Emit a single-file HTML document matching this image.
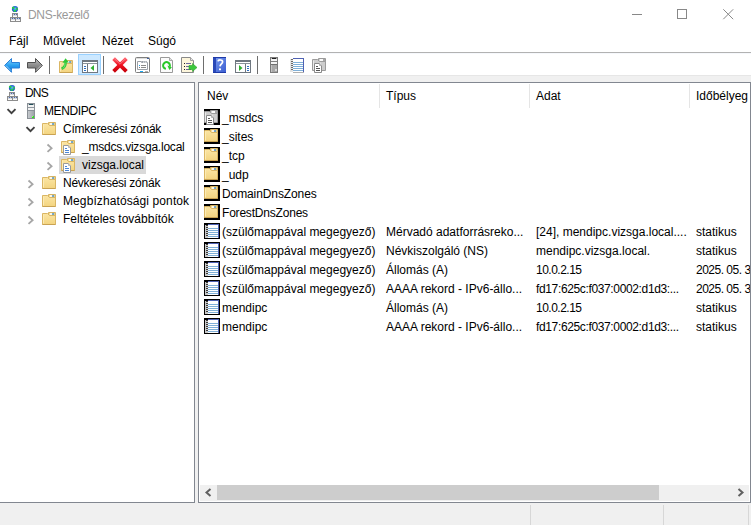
<!DOCTYPE html>
<html><head><meta charset="utf-8">
<style>
*{margin:0;padding:0;box-sizing:border-box}
html,body{width:751px;height:525px;overflow:hidden;background:#fff}
body{position:relative;font-family:"Liberation Sans",sans-serif;font-size:12px;color:#000}
.a{position:absolute}
.t{position:absolute;white-space:nowrap;line-height:14px}
svg{position:absolute;overflow:visible}
.clip{position:absolute;overflow:hidden}
</style></head><body>
<svg style="left:7px;top:5px" width="16" height="17" viewBox="0 0 16 17" ><defs><radialGradient id="gl" cx="0.5" cy="0.45" r="0.6"><stop offset="0" stop-color="#6cc0ff"/><stop offset="0.55" stop-color="#2a70e0"/><stop offset="1" stop-color="#1a3aa8"/></radialGradient></defs>
<circle cx="8" cy="4" r="3.1" fill="url(#gl)"/>
<ellipse cx="6.3" cy="2.8" rx="1.4" ry="1.1" fill="#22d040"/>
<ellipse cx="9.9" cy="3.9" rx="1" ry="1.1" fill="#30c850"/>
<ellipse cx="7.8" cy="5.8" rx="1.3" ry="1" fill="#1ee040"/><rect x="5.5" y="8.5" width="5" height="4" fill="#d6d8dc" stroke="#8c8c8c"/><rect x="6" y="9" width="4" height="1" fill="#c0c8d8"/><rect x="7" y="9" width="1" height="1" fill="#4a6aa8"/><rect x="9" y="9" width="1" height="1" fill="#4a6aa8"/><rect x="6" y="11" width="4" height="1" fill="#fafafa"/><rect x="3.5" y="12.5" width="5" height="4" fill="#d6d8dc" stroke="#8c8c8c"/><rect x="4" y="13" width="4" height="1" fill="#c0c8d8"/><rect x="5" y="13" width="1" height="1" fill="#4a6aa8"/><rect x="7" y="13" width="1" height="1" fill="#4a6aa8"/><rect x="4" y="15" width="4" height="1" fill="#fafafa"/><rect x="8.5" y="12.5" width="5" height="4" fill="#d6d8dc" stroke="#8c8c8c"/><rect x="9" y="13" width="4" height="1" fill="#c0c8d8"/><rect x="10" y="13" width="1" height="1" fill="#4a6aa8"/><rect x="12" y="13" width="1" height="1" fill="#4a6aa8"/><rect x="9" y="15" width="4" height="1" fill="#fafafa"/></svg>
<div class="t" style="left:28px;top:8px;color:#999;letter-spacing:-0.3px">DNS-kezelő</div>
<div class="a" style="left:632px;top:14px;width:10px;height:1px;background:#888"></div>
<div class="a" style="left:677px;top:9px;width:10px;height:10px;border:1px solid #888"></div>
<svg style="left:723px;top:9px" width="11" height="11" viewBox="0 0 11 11" ><path d="M0.3 0.3L10.2 10.2M10.2 0.3L0.3 10.2" stroke="#888" stroke-width="1"/></svg>
<div class="t" style="left:9px;top:34px">Fájl</div>
<div class="t" style="left:43px;top:34px">Művelet</div>
<div class="t" style="left:102px;top:34px">Nézet</div>
<div class="t" style="left:148px;top:34px">Súgó</div>
<div class="a" style="left:0px;top:52px;width:751px;height:1px;background:#b2b2b2"></div>
<div class="a" style="left:0px;top:53px;width:751px;height:1px;background:#f6f8fc"></div>
<svg style="left:3px;top:57px" width="18" height="17" viewBox="0 0 18 17" ><defs><linearGradient id="ba" x1="0" y1="0" x2="0" y2="1"><stop offset="0" stop-color="#8ad8ff"/><stop offset="0.5" stop-color="#2aa0f0"/><stop offset="1" stop-color="#0a6ad0"/></linearGradient></defs>
<path d="M1.6 8.4L8.5 1.5V5.5H16.5V11H8.5V15.3Z" fill="url(#ba)" stroke="#2a80d8" stroke-width="1" stroke-linejoin="miter"/><path d="M3 8.6L8 13.6" stroke="#a8e4ff" stroke-width="0.8"/></svg>
<svg style="left:26px;top:57px" width="18" height="17" viewBox="0 0 18 17" ><defs><linearGradient id="fa" x1="0" y1="0" x2="0" y2="1"><stop offset="0" stop-color="#c0c0c0"/><stop offset="0.5" stop-color="#8c8c8c"/><stop offset="1" stop-color="#6a6a6a"/></linearGradient></defs>
<path d="M16.4 8.4L9.5 1.5V5.5H1.5V11H9.5V15.3Z" fill="url(#fa)" stroke="#505050" stroke-width="1"/><path d="M15 8.6L10 13.6" stroke="#d8d8d8" stroke-width="0.8"/></svg>
<div class="a" style="left:49px;top:56px;width:1px;height:18px;background:#6e6e6e"></div>
<svg style="left:59px;top:58px" width="16" height="16" viewBox="0 0 16 16" ><defs><linearGradient id="fg" x1="0" y1="0" x2="0" y2="1"><stop offset="0" stop-color="#fbe5a4"/><stop offset="1" stop-color="#f3d480"/></linearGradient></defs><g transform="translate(0,1)">
<path d="M6.5 1.5H13.5V5.5H6.5Z" fill="#f4d888" stroke="#d8b462" stroke-width="1"/>
<rect x="7.8" y="2.2" width="2.4" height="1.6" fill="#ffffff"/><rect x="9.9" y="2.2" width="2.4" height="1.6" rx="0.8" fill="#3a8fe0"/>
<path d="M0.5 2.5H5.5L7.5 4.5H13.5V13.5H0.5Z" fill="url(#fg)" stroke="#dab664" stroke-width="1"/>
<path d="M1.5 3.5V12.5" stroke="#fcebb4" stroke-width="1"/>
<path d="M0.5 13.5H13.5" stroke="#c9a252" stroke-width="1"/>
</g><path d="M2.6 10.8C5.4 9.6 6.6 7.6 6.6 4.2" fill="none" stroke="#30c838" stroke-width="2.6"/><path d="M3.4 4.8L6.6 0.2L9.8 4.4Z" fill="#30c838"/><path d="M3.6 10.6C5.6 9.4 6 8 6 5" fill="none" stroke="#8ff090" stroke-width="0.7"/></svg>
<div class="a" style="left:78px;top:54px;width:23px;height:21px;background:#cce8ff;border:1px solid #99d1ff"></div>
<svg style="left:82px;top:60px" width="16" height="13" viewBox="0 0 16 13" ><rect x="0.5" y="0.5" width="15" height="12" fill="#fff" stroke="#6f7780"/>
<rect x="1" y="1" width="14" height="1" fill="#6f7780"/><rect x="1" y="3" width="14" height="1" fill="#8a929a"/>
<rect x="5" y="4" width="1" height="9" fill="#6f7780"/>
<rect x="2" y="6" width="2" height="1" fill="#2f6fc0"/><rect x="2" y="8" width="2" height="1" fill="#2f6fc0"/><rect x="2" y="10" width="2" height="1" fill="#2f6fc0"/>
<path d="M8.5 8L12 5V11Z" fill="#30b030"/></svg>
<div class="a" style="left:103px;top:56px;width:1px;height:18px;background:#6e6e6e"></div>
<svg style="left:112px;top:57px" width="16" height="16" viewBox="0 0 16 16" ><defs><linearGradient id="rx" x1="0" y1="0" x2="0" y2="1"><stop offset="0" stop-color="#ff5a66"/><stop offset="0.5" stop-color="#f01020"/><stop offset="1" stop-color="#c8000a"/></linearGradient></defs>
<path d="M1.6 1.6L14.4 14.4M14.4 1.6L1.6 14.4" stroke="url(#rx)" stroke-width="3.8" stroke-linecap="butt"/><path d="M2.6 1.8L8 7.2L13.4 1.8" fill="none" stroke="#f8a0a8" stroke-width="0.8" opacity="0.7"/></svg>
<svg style="left:135px;top:57px" width="16" height="16" viewBox="0 0 16 16" ><rect x="0.5" y="0.5" width="14" height="15" rx="1" fill="#fff" stroke="#7e7e7e"/>
<rect x="1" y="1" width="13" height="1" fill="#dcdcdc"/><rect x="12" y="1" width="2" height="1" fill="#4060a0"/>
<path d="M2.5 4.5H6.5V5.5H12.5V12.5H2.5Z" fill="#fff" stroke="#9aa0a8"/>
<rect x="7" y="4" width="5" height="2" fill="#9aa0a8"/><rect x="8" y="4.6" width="1.5" height="1" fill="#fff"/><rect x="10" y="4.6" width="1.5" height="1" fill="#fff"/>
<rect x="4" y="8" width="1" height="1" fill="#1fa0f0"/><rect x="6" y="8" width="5" height="1" fill="#8a8a8a"/>
<rect x="4" y="10" width="1" height="1" fill="#777"/><rect x="6" y="10" width="5" height="1" fill="#8a8a8a"/>
<rect x="5" y="14" width="3" height="1" fill="#1aa8f0"/><rect x="10" y="14" width="3" height="1" fill="#b0b0b0"/></svg>
<svg style="left:160px;top:57px" width="16" height="16" viewBox="0 0 16 16" ><path d="M0.5 0.5H9.5L12.5 3.5V15.5H0.5Z" fill="#fcfcfc" stroke="#9a9a9a"/>
<path d="M9.5 0.5V3.5H12.5" fill="#e0e0e0" stroke="#a8a8a8"/>
<path d="M5.91 11.85A3.4 3.4 0 1 1 9.69 9.66" fill="none" stroke="#28c828" stroke-width="2"/>
<path d="M7.4 8.6L11.9 10.2L9.4 13Z" fill="#28c828"/></svg>
<svg style="left:181px;top:57px" width="17" height="16" viewBox="0 0 17 16" ><path d="M0.5 0.5H9.5L12.5 3.5V15.5H0.5Z" fill="#fdf6dc" stroke="#8a8a8a"/>
<path d="M9.5 0.5V3.5H12.5" fill="#e8e8e8" stroke="#a0a0a0"/>
<rect x="3" y="6" width="1" height="1" fill="#222"/><rect x="5" y="6" width="5" height="1" fill="#6a6aa0"/>
<rect x="3" y="9" width="1" height="1" fill="#222"/><rect x="5" y="9" width="5" height="1" fill="#6a6aa0"/>
<rect x="3" y="12" width="1" height="1" fill="#222"/><rect x="5" y="12" width="5" height="1" fill="#6a6aa0"/>
<path d="M8 8.5H11.5V6.5L16 10.5L11.5 14.5V12.5H8Z" fill="#3cc83c" stroke="#2aa02a" stroke-width="0.6"/></svg>
<div class="a" style="left:203px;top:56px;width:1px;height:18px;background:#6e6e6e"></div>
<svg style="left:213px;top:57px" width="13" height="16" viewBox="0 0 13 16" ><defs><linearGradient id="hp" x1="0" y1="0" x2="1" y2="1"><stop offset="0" stop-color="#7a9cf0"/><stop offset="1" stop-color="#3a5cd0"/></linearGradient></defs><rect x="0" y="0" width="13" height="16" fill="url(#hp)"/>
<rect x="0" y="0" width="3" height="16" fill="#2a48b8"/><rect x="0" y="0" width="13" height="1" fill="#1e3aa8"/><rect x="0" y="15" width="13" height="1" fill="#1e3aa8"/>
<path d="M5 4.4C5.2 2.4 9.8 2.4 9.6 5C9.4 6.8 7.2 7 7 9.4" fill="none" stroke="#fff" stroke-width="1.7"/>
<rect x="6" y="11.4" width="2" height="1.8" fill="#fff"/></svg>
<svg style="left:235px;top:60px" width="16" height="13" viewBox="0 0 16 13" ><rect x="0.5" y="0.5" width="15" height="12" fill="#fff" stroke="#6f7780"/>
<rect x="1" y="1" width="14" height="1" fill="#6f7780"/><rect x="1" y="3" width="14" height="1" fill="#8a929a"/>
<rect x="10" y="4" width="1" height="9" fill="#6f7780"/>
<rect x="12" y="6" width="2" height="1" fill="#2f6fc0"/><rect x="12" y="8" width="2" height="1" fill="#2f6fc0"/><rect x="12" y="10" width="2" height="1" fill="#2f6fc0"/>
<path d="M4 5L7.5 8L4 11Z" fill="#30b030"/></svg>
<div class="a" style="left:257px;top:56px;width:1px;height:18px;background:#6e6e6e"></div>
<svg style="left:270px;top:57px" width="8" height="16" viewBox="0 0 8 16" ><rect x="0.5" y="0.5" width="7" height="15" fill="#a8a8a8" stroke="#7a7a7a"/>
<rect x="1" y="1" width="1" height="14" fill="#c4c4c4"/>
<rect x="2" y="1" width="4" height="1" fill="#202020"/>
<rect x="1" y="2" width="6" height="2" fill="#f4f4f4"/>
<rect x="1" y="4" width="6" height="1" fill="#808080"/>
<rect x="1" y="5" width="6" height="2" fill="#f4f4f4"/>
<rect x="1" y="7" width="6" height="1" fill="#707070"/>
<rect x="5" y="12" width="2" height="2" fill="#d8d8d8"/></svg>
<svg style="left:289px;top:57px" width="16" height="16" viewBox="0 0 16 16" ><rect x="4" y="1" width="11" height="14" fill="#fff"/><rect x="4" y="1" width="11" height="1" fill="#4f62b4"/><rect x="14" y="1" width="1" height="14" fill="#4f62b4"/><rect x="4" y="5" width="10" height="1" fill="#7fb0d8"/><rect x="4" y="7" width="10" height="1" fill="#7fb0d8"/><rect x="4" y="9" width="10" height="1" fill="#7fb0d8"/><rect x="4" y="11" width="10" height="1" fill="#7fb0d8"/><rect x="4" y="13" width="10" height="1" fill="#7fb0d8"/><rect x="1" y="2" width="3" height="13" fill="#e4e4e4"/><rect x="2" y="2" width="2" height="1" fill="#6a6a6a"/><rect x="2" y="4" width="2" height="1" fill="#6a6a6a"/><rect x="2" y="6" width="2" height="1" fill="#6a6a6a"/><rect x="2" y="8" width="2" height="1" fill="#6a6a6a"/><rect x="2" y="10" width="2" height="1" fill="#6a6a6a"/><rect x="2" y="12" width="2" height="1" fill="#6a6a6a"/><rect x="4" y="15" width="11" height="1" fill="#b0b0b0"/></svg>
<svg style="left:312px;top:57px" width="16" height="16" viewBox="0 0 16 16" ><g transform="translate(0,0)">
<path d="M6.5 1.5H13.5V5.5H6.5Z" fill="#d4d4d4" stroke="#9a9a9a"/>
<rect x="8" y="2" width="3" height="2" fill="#fafafa"/><rect x="11" y="2" width="2" height="2" fill="#a8a8a8"/>
<path d="M0.5 2.5H5.5L7.5 4.5H13.5V13.5H0.5Z" fill="#cdcdcd" stroke="#9c9c9c"/>
<path d="M1.5 3.5V12.5" stroke="#ececec"/>
<path d="M8.5 5.5V12.5" stroke="#dedede"/>
<path d="M2.5 6.5H7.5L9.5 8.5V15.5H2.5Z" fill="#fff" stroke="#8a8a8a"/>
<path d="M7.5 6.5V8.5H9.5" fill="#eee" stroke="#b0b0b0"/>
<rect x="4" y="9" width="2" height="1" fill="#555"/>
<rect x="4" y="11" width="4" height="1" fill="#555"/>
<rect x="4" y="13" width="4" height="1" fill="#555"/>
</g></svg>
<div class="a" style="left:0px;top:75px;width:751px;height:7px;background:#f0f0f0"></div>
<div class="a" style="left:0px;top:75px;width:751px;height:1px;background:#e6e6e6"></div>
<div class="a" style="left:0;top:82px;width:195px;height:421px;border-top:1px solid #828790;border-right:1px solid #828790;border-bottom:1px solid #828790;background:#fff"></div>
<div class="a" style="left:195px;top:82px;width:3px;height:421px;background:#f0f0f0"></div>
<div class="a" style="left:198px;top:82px;width:553px;height:421px;border:1px solid #828790;background:#fff"></div>
<div class="a" style="left:0px;top:503px;width:751px;height:22px;background:#f0f0f0"></div>
<div class="a" style="left:530px;top:505px;width:1px;height:20px;background:#d7d7d7"></div>
<div class="a" style="left:663px;top:505px;width:1px;height:20px;background:#d7d7d7"></div>
<div class="a" style="left:748px;top:505px;width:1px;height:20px;background:#d7d7d7"></div>
<svg style="left:4px;top:84px" width="16" height="17" viewBox="0 0 16 17" ><defs><radialGradient id="gl" cx="0.5" cy="0.45" r="0.6"><stop offset="0" stop-color="#6cc0ff"/><stop offset="0.55" stop-color="#2a70e0"/><stop offset="1" stop-color="#1a3aa8"/></radialGradient></defs>
<circle cx="8" cy="4" r="3.1" fill="url(#gl)"/>
<ellipse cx="6.3" cy="2.8" rx="1.4" ry="1.1" fill="#22d040"/>
<ellipse cx="9.9" cy="3.9" rx="1" ry="1.1" fill="#30c850"/>
<ellipse cx="7.8" cy="5.8" rx="1.3" ry="1" fill="#1ee040"/><rect x="5.5" y="8.5" width="5" height="4" fill="#d6d8dc" stroke="#8c8c8c"/><rect x="6" y="9" width="4" height="1" fill="#c0c8d8"/><rect x="7" y="9" width="1" height="1" fill="#4a6aa8"/><rect x="9" y="9" width="1" height="1" fill="#4a6aa8"/><rect x="6" y="11" width="4" height="1" fill="#fafafa"/><rect x="3.5" y="12.5" width="5" height="4" fill="#d6d8dc" stroke="#8c8c8c"/><rect x="4" y="13" width="4" height="1" fill="#c0c8d8"/><rect x="5" y="13" width="1" height="1" fill="#4a6aa8"/><rect x="7" y="13" width="1" height="1" fill="#4a6aa8"/><rect x="4" y="15" width="4" height="1" fill="#fafafa"/><rect x="8.5" y="12.5" width="5" height="4" fill="#d6d8dc" stroke="#8c8c8c"/><rect x="9" y="13" width="4" height="1" fill="#c0c8d8"/><rect x="10" y="13" width="1" height="1" fill="#4a6aa8"/><rect x="12" y="13" width="1" height="1" fill="#4a6aa8"/><rect x="9" y="15" width="4" height="1" fill="#fafafa"/></svg>
<div class="t" style="left:25px;top:86px;letter-spacing:-0.8px">DNS</div>
<svg style="left:6px;top:108px" width="10" height="7" viewBox="0 0 10 7" ><path d="M1.5 1.2L5.5 5.2L9.5 1.2" fill="none" stroke="#404040" stroke-width="1.9"/></svg>
<svg style="left:27px;top:103px" width="8" height="16" viewBox="0 0 8 16" ><defs><linearGradient id="sv" x1="0" y1="0" x2="1" y2="0"><stop offset="0" stop-color="#c8ccd0"/><stop offset="1" stop-color="#9aa0a6"/></linearGradient></defs>
<rect x="0.5" y="0.5" width="7" height="15" fill="url(#sv)" stroke="#8a9096"/>
<rect x="2" y="1" width="4" height="1" fill="#1f4f5a"/>
<rect x="1" y="2" width="6" height="2" fill="#f2f2f2"/>
<rect x="1" y="4" width="6" height="1" fill="#9098a0"/>
<rect x="1" y="5" width="6" height="2" fill="#f2f2f2"/>
<rect x="1" y="7" width="6" height="1" fill="#8a9098"/>
<rect x="5" y="13" width="2" height="2" fill="#30e020"/><rect x="5" y="13" width="1" height="1" fill="#a0f080"/></svg>
<div class="t" style="left:44px;top:104px;letter-spacing:-0.4px">MENDIPC</div>
<svg style="left:25px;top:126px" width="10" height="7" viewBox="0 0 10 7" ><path d="M1.5 1.2L5.5 5.2L9.5 1.2" fill="none" stroke="#404040" stroke-width="1.9"/></svg>
<svg style="left:42px;top:121px" width="16" height="16" viewBox="0 0 16 16" ><defs><linearGradient id="fg" x1="0" y1="0" x2="0" y2="1"><stop offset="0" stop-color="#fbe5a4"/><stop offset="1" stop-color="#f3d480"/></linearGradient></defs><g transform="translate(0,0)">
<path d="M6.5 1.5H13.5V5.5H6.5Z" fill="#f4d888" stroke="#d8b462" stroke-width="1"/>
<rect x="7.8" y="2.2" width="2.4" height="1.6" fill="#ffffff"/><rect x="9.9" y="2.2" width="2.4" height="1.6" rx="0.8" fill="#3a8fe0"/>
<path d="M0.5 2.5H5.5L7.5 4.5H13.5V13.5H0.5Z" fill="url(#fg)" stroke="#dab664" stroke-width="1"/>
<path d="M1.5 3.5V12.5" stroke="#fcebb4" stroke-width="1"/>
<path d="M0.5 13.5H13.5" stroke="#c9a252" stroke-width="1"/>
</g></svg>
<div class="t" style="left:63px;top:122px;letter-spacing:-0.23px">Címkeresési zónák</div>
<svg style="left:47px;top:144px" width="7" height="10" viewBox="0 0 7 10" ><path d="M0.5 0.5L4.6 4.2L0.5 7.9" fill="none" stroke="#a6a6a6" stroke-width="1.8"/></svg>
<svg style="left:61px;top:139px" width="16" height="18" viewBox="0 0 16 18" ><defs><linearGradient id="fg" x1="0" y1="0" x2="0" y2="1"><stop offset="0" stop-color="#fbe5a4"/><stop offset="1" stop-color="#f3d480"/></linearGradient></defs><g transform="translate(0,0)">
<path d="M6.5 1.5H13.5V5.5H6.5Z" fill="#f4d888" stroke="#d8b462" stroke-width="1"/>
<rect x="7.8" y="2.2" width="2.4" height="1.6" fill="#ffffff"/><rect x="9.9" y="2.2" width="2.4" height="1.6" rx="0.8" fill="#3a8fe0"/>
<path d="M0.5 2.5H5.5L7.5 4.5H13.5V13.5H0.5Z" fill="url(#fg)" stroke="#dab664" stroke-width="1"/>
<path d="M1.5 3.5V12.5" stroke="#fcebb4" stroke-width="1"/>
<path d="M0.5 13.5H13.5" stroke="#c9a252" stroke-width="1"/>
</g><g transform="translate(2,6)">
<path d="M0.5 0.5H5.5L7.5 2.5V9.5H0.5Z" fill="#fff" stroke="#9a9a9a" stroke-width="1"/>
<path d="M5.5 0.5V2.5H7.5" fill="#ececec" stroke="#b8b8b8" stroke-width="1"/>
<rect x="2" y="3" width="2" height="1" fill="#4a86d8"/>
<rect x="2" y="5" width="4" height="1" fill="#4a86d8"/>
<rect x="2" y="7" width="4" height="1" fill="#4a86d8"/>
</g></svg>
<div class="t" style="left:82px;top:140px;letter-spacing:-0.22px">_msdcs.vizsga.local</div>
<div class="a" style="left:59px;top:156px;width:87px;height:18px;background:#d9d9d9"></div>
<svg style="left:47px;top:162px" width="7" height="10" viewBox="0 0 7 10" ><path d="M0.5 0.5L4.6 4.2L0.5 7.9" fill="none" stroke="#a6a6a6" stroke-width="1.8"/></svg>
<svg style="left:61px;top:157px" width="16" height="18" viewBox="0 0 16 18" ><defs><linearGradient id="fg" x1="0" y1="0" x2="0" y2="1"><stop offset="0" stop-color="#fbe5a4"/><stop offset="1" stop-color="#f3d480"/></linearGradient></defs><g transform="translate(0,0)">
<path d="M6.5 1.5H13.5V5.5H6.5Z" fill="#f4d888" stroke="#d8b462" stroke-width="1"/>
<rect x="7.8" y="2.2" width="2.4" height="1.6" fill="#ffffff"/><rect x="9.9" y="2.2" width="2.4" height="1.6" rx="0.8" fill="#3a8fe0"/>
<path d="M0.5 2.5H5.5L7.5 4.5H13.5V13.5H0.5Z" fill="url(#fg)" stroke="#dab664" stroke-width="1"/>
<path d="M1.5 3.5V12.5" stroke="#fcebb4" stroke-width="1"/>
<path d="M0.5 13.5H13.5" stroke="#c9a252" stroke-width="1"/>
</g><g transform="translate(2,6)">
<path d="M0.5 0.5H5.5L7.5 2.5V9.5H0.5Z" fill="#fff" stroke="#9a9a9a" stroke-width="1"/>
<path d="M5.5 0.5V2.5H7.5" fill="#ececec" stroke="#b8b8b8" stroke-width="1"/>
<rect x="2" y="3" width="2" height="1" fill="#4a86d8"/>
<rect x="2" y="5" width="4" height="1" fill="#4a86d8"/>
<rect x="2" y="7" width="4" height="1" fill="#4a86d8"/>
</g></svg>
<div class="t" style="left:82px;top:158px">vizsga.local</div>
<svg style="left:28px;top:180px" width="7" height="10" viewBox="0 0 7 10" ><path d="M0.5 0.5L4.6 4.2L0.5 7.9" fill="none" stroke="#a6a6a6" stroke-width="1.8"/></svg>
<svg style="left:42px;top:175px" width="16" height="16" viewBox="0 0 16 16" ><defs><linearGradient id="fg" x1="0" y1="0" x2="0" y2="1"><stop offset="0" stop-color="#fbe5a4"/><stop offset="1" stop-color="#f3d480"/></linearGradient></defs><g transform="translate(0,0)">
<path d="M6.5 1.5H13.5V5.5H6.5Z" fill="#f4d888" stroke="#d8b462" stroke-width="1"/>
<rect x="7.8" y="2.2" width="2.4" height="1.6" fill="#ffffff"/><rect x="9.9" y="2.2" width="2.4" height="1.6" rx="0.8" fill="#3a8fe0"/>
<path d="M0.5 2.5H5.5L7.5 4.5H13.5V13.5H0.5Z" fill="url(#fg)" stroke="#dab664" stroke-width="1"/>
<path d="M1.5 3.5V12.5" stroke="#fcebb4" stroke-width="1"/>
<path d="M0.5 13.5H13.5" stroke="#c9a252" stroke-width="1"/>
</g></svg>
<div class="t" style="left:63px;top:176px;letter-spacing:-0.25px">Névkeresési zónák</div>
<svg style="left:28px;top:198px" width="7" height="10" viewBox="0 0 7 10" ><path d="M0.5 0.5L4.6 4.2L0.5 7.9" fill="none" stroke="#a6a6a6" stroke-width="1.8"/></svg>
<svg style="left:42px;top:193px" width="16" height="16" viewBox="0 0 16 16" ><defs><linearGradient id="fg" x1="0" y1="0" x2="0" y2="1"><stop offset="0" stop-color="#fbe5a4"/><stop offset="1" stop-color="#f3d480"/></linearGradient></defs><g transform="translate(0,0)">
<path d="M6.5 1.5H13.5V5.5H6.5Z" fill="#f4d888" stroke="#d8b462" stroke-width="1"/>
<rect x="7.8" y="2.2" width="2.4" height="1.6" fill="#ffffff"/><rect x="9.9" y="2.2" width="2.4" height="1.6" rx="0.8" fill="#3a8fe0"/>
<path d="M0.5 2.5H5.5L7.5 4.5H13.5V13.5H0.5Z" fill="url(#fg)" stroke="#dab664" stroke-width="1"/>
<path d="M1.5 3.5V12.5" stroke="#fcebb4" stroke-width="1"/>
<path d="M0.5 13.5H13.5" stroke="#c9a252" stroke-width="1"/>
</g></svg>
<div class="t" style="left:63px;top:194px;letter-spacing:0.1px">Megbízhatósági pontok</div>
<svg style="left:28px;top:216px" width="7" height="10" viewBox="0 0 7 10" ><path d="M0.5 0.5L4.6 4.2L0.5 7.9" fill="none" stroke="#a6a6a6" stroke-width="1.8"/></svg>
<svg style="left:42px;top:211px" width="16" height="16" viewBox="0 0 16 16" ><defs><linearGradient id="fg" x1="0" y1="0" x2="0" y2="1"><stop offset="0" stop-color="#fbe5a4"/><stop offset="1" stop-color="#f3d480"/></linearGradient></defs><g transform="translate(0,0)">
<path d="M6.5 1.5H13.5V5.5H6.5Z" fill="#f4d888" stroke="#d8b462" stroke-width="1"/>
<rect x="7.8" y="2.2" width="2.4" height="1.6" fill="#ffffff"/><rect x="9.9" y="2.2" width="2.4" height="1.6" rx="0.8" fill="#3a8fe0"/>
<path d="M0.5 2.5H5.5L7.5 4.5H13.5V13.5H0.5Z" fill="url(#fg)" stroke="#dab664" stroke-width="1"/>
<path d="M1.5 3.5V12.5" stroke="#fcebb4" stroke-width="1"/>
<path d="M0.5 13.5H13.5" stroke="#c9a252" stroke-width="1"/>
</g></svg>
<div class="t" style="left:63px;top:212px">Feltételes továbbítók</div>
<div class="clip" style="left:199px;top:83px;width:551px;height:402px">
<div class="t" style="left:8px;top:6px">Név</div>
<div class="a" style="left:180px;top:1px;width:1px;height:24px;background:#e5e5e5"></div>
<div class="t" style="left:187px;top:6px">Típus</div>
<div class="a" style="left:330px;top:1px;width:1px;height:24px;background:#e5e5e5"></div>
<div class="t" style="left:337px;top:6px">Adat</div>
<div class="a" style="left:490px;top:1px;width:1px;height:24px;background:#e5e5e5"></div>
<div class="t" style="left:497px;top:6px">Időbélyeg</div>
<svg style="left:5px;top:26px" width="16" height="16" viewBox="0 0 16 16" ><rect x="0" y="0" width="16" height="16" fill="#000"/><g transform="translate(0,0)">
<path d="M6.5 1.5H13.5V5.5H6.5Z" fill="#d4d4d4" stroke="#9a9a9a"/>
<rect x="8" y="2" width="3" height="2" fill="#fafafa"/><rect x="11" y="2" width="2" height="2" fill="#a8a8a8"/>
<path d="M0.5 2.5H5.5L7.5 4.5H13.5V13.5H0.5Z" fill="#cdcdcd" stroke="#9c9c9c"/>
<path d="M1.5 3.5V12.5" stroke="#ececec"/>
<path d="M8.5 5.5V12.5" stroke="#dedede"/>
<path d="M2.5 6.5H7.5L9.5 8.5V15.5H2.5Z" fill="#fff" stroke="#8a8a8a"/>
<path d="M7.5 6.5V8.5H9.5" fill="#eee" stroke="#b0b0b0"/>
<rect x="4" y="9" width="2" height="1" fill="#555"/>
<rect x="4" y="11" width="4" height="1" fill="#555"/>
<rect x="4" y="13" width="4" height="1" fill="#555"/>
</g></svg>
<div class="t" style="left:23px;top:28px">_msdcs</div>
<svg style="left:5px;top:45px" width="16" height="16" viewBox="0 0 16 16" ><defs><linearGradient id="fg" x1="0" y1="0" x2="0" y2="1"><stop offset="0" stop-color="#fbe5a4"/><stop offset="1" stop-color="#f3d480"/></linearGradient></defs><rect x="0" y="0" width="16" height="16" fill="#000"/><g transform="translate(0,0)">
<path d="M6.5 1.5H13.5V5.5H6.5Z" fill="#f4d888" stroke="#d8b462" stroke-width="1"/>
<rect x="7.8" y="2.2" width="2.4" height="1.6" fill="#ffffff"/><rect x="9.9" y="2.2" width="2.4" height="1.6" rx="0.8" fill="#3a8fe0"/>
<path d="M0.5 2.5H5.5L7.5 4.5H13.5V13.5H0.5Z" fill="url(#fg)" stroke="#dab664" stroke-width="1"/>
<path d="M1.5 3.5V12.5" stroke="#fcebb4" stroke-width="1"/>
<path d="M0.5 13.5H13.5" stroke="#c9a252" stroke-width="1"/>
</g></svg>
<div class="t" style="left:23px;top:47px">_sites</div>
<svg style="left:5px;top:64px" width="16" height="16" viewBox="0 0 16 16" ><defs><linearGradient id="fg" x1="0" y1="0" x2="0" y2="1"><stop offset="0" stop-color="#fbe5a4"/><stop offset="1" stop-color="#f3d480"/></linearGradient></defs><rect x="0" y="0" width="16" height="16" fill="#000"/><g transform="translate(0,0)">
<path d="M6.5 1.5H13.5V5.5H6.5Z" fill="#f4d888" stroke="#d8b462" stroke-width="1"/>
<rect x="7.8" y="2.2" width="2.4" height="1.6" fill="#ffffff"/><rect x="9.9" y="2.2" width="2.4" height="1.6" rx="0.8" fill="#3a8fe0"/>
<path d="M0.5 2.5H5.5L7.5 4.5H13.5V13.5H0.5Z" fill="url(#fg)" stroke="#dab664" stroke-width="1"/>
<path d="M1.5 3.5V12.5" stroke="#fcebb4" stroke-width="1"/>
<path d="M0.5 13.5H13.5" stroke="#c9a252" stroke-width="1"/>
</g></svg>
<div class="t" style="left:23px;top:66px">_tcp</div>
<svg style="left:5px;top:83px" width="16" height="16" viewBox="0 0 16 16" ><defs><linearGradient id="fg" x1="0" y1="0" x2="0" y2="1"><stop offset="0" stop-color="#fbe5a4"/><stop offset="1" stop-color="#f3d480"/></linearGradient></defs><rect x="0" y="0" width="16" height="16" fill="#000"/><g transform="translate(0,0)">
<path d="M6.5 1.5H13.5V5.5H6.5Z" fill="#f4d888" stroke="#d8b462" stroke-width="1"/>
<rect x="7.8" y="2.2" width="2.4" height="1.6" fill="#ffffff"/><rect x="9.9" y="2.2" width="2.4" height="1.6" rx="0.8" fill="#3a8fe0"/>
<path d="M0.5 2.5H5.5L7.5 4.5H13.5V13.5H0.5Z" fill="url(#fg)" stroke="#dab664" stroke-width="1"/>
<path d="M1.5 3.5V12.5" stroke="#fcebb4" stroke-width="1"/>
<path d="M0.5 13.5H13.5" stroke="#c9a252" stroke-width="1"/>
</g></svg>
<div class="t" style="left:23px;top:85px">_udp</div>
<svg style="left:5px;top:102px" width="16" height="16" viewBox="0 0 16 16" ><defs><linearGradient id="fg" x1="0" y1="0" x2="0" y2="1"><stop offset="0" stop-color="#fbe5a4"/><stop offset="1" stop-color="#f3d480"/></linearGradient></defs><rect x="0" y="0" width="16" height="16" fill="#000"/><g transform="translate(0,0)">
<path d="M6.5 1.5H13.5V5.5H6.5Z" fill="#f4d888" stroke="#d8b462" stroke-width="1"/>
<rect x="7.8" y="2.2" width="2.4" height="1.6" fill="#ffffff"/><rect x="9.9" y="2.2" width="2.4" height="1.6" rx="0.8" fill="#3a8fe0"/>
<path d="M0.5 2.5H5.5L7.5 4.5H13.5V13.5H0.5Z" fill="url(#fg)" stroke="#dab664" stroke-width="1"/>
<path d="M1.5 3.5V12.5" stroke="#fcebb4" stroke-width="1"/>
<path d="M0.5 13.5H13.5" stroke="#c9a252" stroke-width="1"/>
</g></svg>
<div class="t" style="left:23px;top:104px;letter-spacing:-0.1px">DomainDnsZones</div>
<svg style="left:5px;top:121px" width="16" height="16" viewBox="0 0 16 16" ><defs><linearGradient id="fg" x1="0" y1="0" x2="0" y2="1"><stop offset="0" stop-color="#fbe5a4"/><stop offset="1" stop-color="#f3d480"/></linearGradient></defs><rect x="0" y="0" width="16" height="16" fill="#000"/><g transform="translate(0,0)">
<path d="M6.5 1.5H13.5V5.5H6.5Z" fill="#f4d888" stroke="#d8b462" stroke-width="1"/>
<rect x="7.8" y="2.2" width="2.4" height="1.6" fill="#ffffff"/><rect x="9.9" y="2.2" width="2.4" height="1.6" rx="0.8" fill="#3a8fe0"/>
<path d="M0.5 2.5H5.5L7.5 4.5H13.5V13.5H0.5Z" fill="url(#fg)" stroke="#dab664" stroke-width="1"/>
<path d="M1.5 3.5V12.5" stroke="#fcebb4" stroke-width="1"/>
<path d="M0.5 13.5H13.5" stroke="#c9a252" stroke-width="1"/>
</g></svg>
<div class="t" style="left:23px;top:123px;letter-spacing:-0.2px">ForestDnsZones</div>
<svg style="left:5px;top:140px" width="16" height="16" viewBox="0 0 16 16" ><rect x="0" y="0" width="16" height="16" fill="#000"/><rect x="4" y="1" width="11" height="14" fill="#fff"/><rect x="4" y="1" width="11" height="1" fill="#4f62b4"/><rect x="14" y="1" width="1" height="14" fill="#4f62b4"/><rect x="4" y="5" width="10" height="1" fill="#7fb0d8"/><rect x="4" y="7" width="10" height="1" fill="#7fb0d8"/><rect x="4" y="9" width="10" height="1" fill="#7fb0d8"/><rect x="4" y="11" width="10" height="1" fill="#7fb0d8"/><rect x="4" y="13" width="10" height="1" fill="#7fb0d8"/><rect x="1" y="2" width="3" height="13" fill="#c8c8c8"/><rect x="2" y="2" width="2" height="1" fill="#3c3c3c"/><rect x="2" y="4" width="2" height="1" fill="#3c3c3c"/><rect x="2" y="6" width="2" height="1" fill="#3c3c3c"/><rect x="2" y="8" width="2" height="1" fill="#3c3c3c"/><rect x="2" y="10" width="2" height="1" fill="#3c3c3c"/><rect x="2" y="12" width="2" height="1" fill="#3c3c3c"/></svg>
<div class="t" style="left:23px;top:142px">(szülőmappával megegyező)</div>
<div class="t" style="left:187px;top:142px">Mérvadó adatforrásreko...</div>
<div class="t" style="left:337px;top:142px">[24], mendipc.vizsga.local....</div>
<div class="t" style="left:497px;top:142px">statikus</div>
<svg style="left:5px;top:159px" width="16" height="16" viewBox="0 0 16 16" ><rect x="0" y="0" width="16" height="16" fill="#000"/><rect x="4" y="1" width="11" height="14" fill="#fff"/><rect x="4" y="1" width="11" height="1" fill="#4f62b4"/><rect x="14" y="1" width="1" height="14" fill="#4f62b4"/><rect x="4" y="5" width="10" height="1" fill="#7fb0d8"/><rect x="4" y="7" width="10" height="1" fill="#7fb0d8"/><rect x="4" y="9" width="10" height="1" fill="#7fb0d8"/><rect x="4" y="11" width="10" height="1" fill="#7fb0d8"/><rect x="4" y="13" width="10" height="1" fill="#7fb0d8"/><rect x="1" y="2" width="3" height="13" fill="#c8c8c8"/><rect x="2" y="2" width="2" height="1" fill="#3c3c3c"/><rect x="2" y="4" width="2" height="1" fill="#3c3c3c"/><rect x="2" y="6" width="2" height="1" fill="#3c3c3c"/><rect x="2" y="8" width="2" height="1" fill="#3c3c3c"/><rect x="2" y="10" width="2" height="1" fill="#3c3c3c"/><rect x="2" y="12" width="2" height="1" fill="#3c3c3c"/></svg>
<div class="t" style="left:23px;top:161px">(szülőmappával megegyező)</div>
<div class="t" style="left:187px;top:161px">Névkiszolgáló (NS)</div>
<div class="t" style="left:337px;top:161px">mendipc.vizsga.local.</div>
<div class="t" style="left:497px;top:161px">statikus</div>
<svg style="left:5px;top:178px" width="16" height="16" viewBox="0 0 16 16" ><rect x="0" y="0" width="16" height="16" fill="#000"/><rect x="4" y="1" width="11" height="14" fill="#fff"/><rect x="4" y="1" width="11" height="1" fill="#4f62b4"/><rect x="14" y="1" width="1" height="14" fill="#4f62b4"/><rect x="4" y="5" width="10" height="1" fill="#7fb0d8"/><rect x="4" y="7" width="10" height="1" fill="#7fb0d8"/><rect x="4" y="9" width="10" height="1" fill="#7fb0d8"/><rect x="4" y="11" width="10" height="1" fill="#7fb0d8"/><rect x="4" y="13" width="10" height="1" fill="#7fb0d8"/><rect x="1" y="2" width="3" height="13" fill="#c8c8c8"/><rect x="2" y="2" width="2" height="1" fill="#3c3c3c"/><rect x="2" y="4" width="2" height="1" fill="#3c3c3c"/><rect x="2" y="6" width="2" height="1" fill="#3c3c3c"/><rect x="2" y="8" width="2" height="1" fill="#3c3c3c"/><rect x="2" y="10" width="2" height="1" fill="#3c3c3c"/><rect x="2" y="12" width="2" height="1" fill="#3c3c3c"/></svg>
<div class="t" style="left:23px;top:180px">(szülőmappával megegyező)</div>
<div class="t" style="left:187px;top:180px">Állomás (A)</div>
<div class="t" style="left:337px;top:180px;letter-spacing:-0.5px">10.0.2.15</div>
<div class="t" style="left:497px;top:180px;letter-spacing:-0.5px">2025. 05. 3</div>
<svg style="left:5px;top:197px" width="16" height="16" viewBox="0 0 16 16" ><rect x="0" y="0" width="16" height="16" fill="#000"/><rect x="4" y="1" width="11" height="14" fill="#fff"/><rect x="4" y="1" width="11" height="1" fill="#4f62b4"/><rect x="14" y="1" width="1" height="14" fill="#4f62b4"/><rect x="4" y="5" width="10" height="1" fill="#7fb0d8"/><rect x="4" y="7" width="10" height="1" fill="#7fb0d8"/><rect x="4" y="9" width="10" height="1" fill="#7fb0d8"/><rect x="4" y="11" width="10" height="1" fill="#7fb0d8"/><rect x="4" y="13" width="10" height="1" fill="#7fb0d8"/><rect x="1" y="2" width="3" height="13" fill="#c8c8c8"/><rect x="2" y="2" width="2" height="1" fill="#3c3c3c"/><rect x="2" y="4" width="2" height="1" fill="#3c3c3c"/><rect x="2" y="6" width="2" height="1" fill="#3c3c3c"/><rect x="2" y="8" width="2" height="1" fill="#3c3c3c"/><rect x="2" y="10" width="2" height="1" fill="#3c3c3c"/><rect x="2" y="12" width="2" height="1" fill="#3c3c3c"/></svg>
<div class="t" style="left:23px;top:199px">(szülőmappával megegyező)</div>
<div class="t" style="left:187px;top:199px">AAAA rekord - IPv6-állo...</div>
<div class="t" style="left:337px;top:199px;letter-spacing:-0.36px">fd17:625c:f037:0002:d1d3:...</div>
<div class="t" style="left:497px;top:199px;letter-spacing:-0.5px">2025. 05. 3</div>
<svg style="left:5px;top:216px" width="16" height="16" viewBox="0 0 16 16" ><rect x="0" y="0" width="16" height="16" fill="#000"/><rect x="4" y="1" width="11" height="14" fill="#fff"/><rect x="4" y="1" width="11" height="1" fill="#4f62b4"/><rect x="14" y="1" width="1" height="14" fill="#4f62b4"/><rect x="4" y="5" width="10" height="1" fill="#7fb0d8"/><rect x="4" y="7" width="10" height="1" fill="#7fb0d8"/><rect x="4" y="9" width="10" height="1" fill="#7fb0d8"/><rect x="4" y="11" width="10" height="1" fill="#7fb0d8"/><rect x="4" y="13" width="10" height="1" fill="#7fb0d8"/><rect x="1" y="2" width="3" height="13" fill="#c8c8c8"/><rect x="2" y="2" width="2" height="1" fill="#3c3c3c"/><rect x="2" y="4" width="2" height="1" fill="#3c3c3c"/><rect x="2" y="6" width="2" height="1" fill="#3c3c3c"/><rect x="2" y="8" width="2" height="1" fill="#3c3c3c"/><rect x="2" y="10" width="2" height="1" fill="#3c3c3c"/><rect x="2" y="12" width="2" height="1" fill="#3c3c3c"/></svg>
<div class="t" style="left:23px;top:218px">mendipc</div>
<div class="t" style="left:187px;top:218px">Állomás (A)</div>
<div class="t" style="left:337px;top:218px;letter-spacing:-0.5px">10.0.2.15</div>
<div class="t" style="left:497px;top:218px">statikus</div>
<svg style="left:5px;top:235px" width="16" height="16" viewBox="0 0 16 16" ><rect x="0" y="0" width="16" height="16" fill="#000"/><rect x="4" y="1" width="11" height="14" fill="#fff"/><rect x="4" y="1" width="11" height="1" fill="#4f62b4"/><rect x="14" y="1" width="1" height="14" fill="#4f62b4"/><rect x="4" y="5" width="10" height="1" fill="#7fb0d8"/><rect x="4" y="7" width="10" height="1" fill="#7fb0d8"/><rect x="4" y="9" width="10" height="1" fill="#7fb0d8"/><rect x="4" y="11" width="10" height="1" fill="#7fb0d8"/><rect x="4" y="13" width="10" height="1" fill="#7fb0d8"/><rect x="1" y="2" width="3" height="13" fill="#c8c8c8"/><rect x="2" y="2" width="2" height="1" fill="#3c3c3c"/><rect x="2" y="4" width="2" height="1" fill="#3c3c3c"/><rect x="2" y="6" width="2" height="1" fill="#3c3c3c"/><rect x="2" y="8" width="2" height="1" fill="#3c3c3c"/><rect x="2" y="10" width="2" height="1" fill="#3c3c3c"/><rect x="2" y="12" width="2" height="1" fill="#3c3c3c"/></svg>
<div class="t" style="left:23px;top:237px">mendipc</div>
<div class="t" style="left:187px;top:237px">AAAA rekord - IPv6-állo...</div>
<div class="t" style="left:337px;top:237px;letter-spacing:-0.36px">fd17:625c:f037:0002:d1d3:...</div>
<div class="t" style="left:497px;top:237px">statikus</div>
</div>
<div class="a" style="left:199px;top:485px;width:551px;height:17px;background:#fff"></div>
<div class="a" style="left:200px;top:485px;width:549px;height:16px;background:#f0f0f0"></div>
<div class="a" style="left:217px;top:485px;width:442px;height:15px;background:#cdcdcd"></div>
<svg style="left:204px;top:488px" width="8" height="9" viewBox="0 0 8 9" ><path d="M6.5 1L2.5 4.5L6.5 8" fill="none" stroke="#606060" stroke-width="2"/></svg>
<svg style="left:737px;top:488px" width="8" height="9" viewBox="0 0 8 9" ><path d="M1.5 1L5.5 4.5L1.5 8" fill="none" stroke="#606060" stroke-width="2"/></svg>
</body></html>
